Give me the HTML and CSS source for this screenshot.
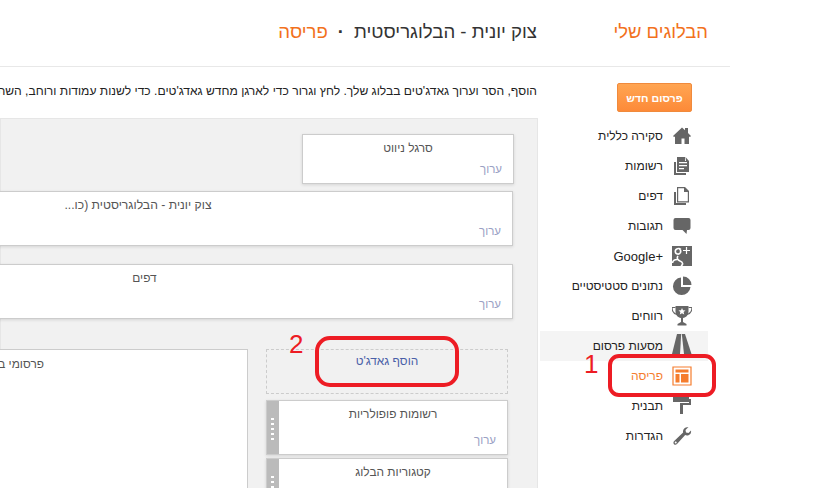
FILE: index.html
```html
<!DOCTYPE html>
<html lang="he" dir="rtl">
<head>
<meta charset="utf-8">
<title>פריסה</title>
<link rel="stylesheet" href="styles.css">
</head>
<body>
<div class="page">
  <header class="topbar">
    <div class="brand">הבלוגים שלי</div>
    <div class="crumb"><span>צוק יונית - הבלוגריסטית</span><span class="dot">·</span><span class="here">פריסה</span></div>
  </header>
  <div class="columns">
    <aside class="side">
      <button class="new-post">פרסום חדש</button>
      <nav class="nav">
        <a class="row"><svg viewBox="0 0 20 20"><path d="M1 10 10 1.500l3 2.800V2h3v5l3 3-1 1-1-.5V18h-4.500v-5.500h-3V18H3v-7.500L2 11z"/></svg><span>סקירה כללית</span></a>
        <a class="row"><svg viewBox="0 0 20 20"><path d="M2 6h2v11h10v2H2z"/><path d="M5 1h8v4h1l-.5-4L17 5v11H5zm2 5v1.300h8V6zm0 3v1.300h8V9zm0 3v1.300h5V12z" fill-rule="evenodd"/></svg><span>רשומות</span></a>
        <a class="row"><svg viewBox="0 0 20 20"><path d="M2 6h2v11h10v2H2z"/><path d="M5 1h8l4 4v11.500H5zm1.200 1.200v13.100h9.600V6H12V2.200z" fill-rule="evenodd"/></svg><span>דפים</span></a>
        <a class="row"><svg viewBox="0 0 20 20"><path d="M3.500 2h13A2 2 0 0 1 18.500 4v8a2 2 0 0 1-2 2H15l-.5 4-4-4h-7a2 2 0 0 1-2-2V4a2 2 0 0 1 2-2z"/></svg><span>תגובות</span></a>
        <a class="row"><svg viewBox="0 0 20 20"><path d="M0 0h20v20H0z"/><g fill="none" stroke="#fff"><path stroke-width="1.600" d="M9 3.500C7 1.800 3.200 2.500 3.300 5.500c.1 3 4.200 3.400 5.200 1 .8-2-.6-3.500-1.500-4.200"/><path stroke-width="1.600" d="M6 10c-1.500 2-.5 4 2 5 3 1 3.500 3.500 1 5M5 13.500C2.500 13.500.8 15 .5 17"/><path stroke-width="1.200" d="M11 4.500h7M14.500 1v7"/></g></svg><span class="latin" dir="ltr">Google+</span></a>
        <a class="row"><svg viewBox="0 0 20 20"><path d="M9 1.500A8.800 8.800 0 1 0 18.500 11H9z"/><path d="M11 0.500a8.500 8.500 0 0 1 8.500 8.500H11z"/></svg><span>נתונים סטטיסטיים</span></a>
        <a class="row"><svg viewBox="0 0 20 20"><path d="M3.500 0h13v5.500C16.500 9 14 11.500 11 12v4l3.500 2v1.500h-9V18L9 16v-4C6 11.500 3.500 9 3.500 5.500z"/><path d="M3.500 1.500H0C0 5 1.500 7.500 5 8.500M16.500 1.500H20c0 3.500-1.500 6-5 7" fill="none" stroke="#666" stroke-width="1.200"/><path fill="#fff" d="m10 2 1 2.300 2.500.2-1.900 1.600.6 2.400L10 7.200 7.800 8.500l.6-2.400-1.900-1.600L9 4.300z"/></svg><span>רווחים</span></a>
        <a class="row active"><svg class="tall" viewBox="0 0 20 20"><path d="M5 -2H9.200L8 18H0z"/><path d="M9.800 -2H13L19.500 18H12z"/></svg><span>מסעות פרסום</span></a>
        <a class="row current"><svg viewBox="0 0 20 20"><path d="M1 1h18v18H1z" fill="none" stroke="#f57d2e" stroke-width="1.200"/><path fill="#f57d2e" d="M3.500 3.500h13v3h-13zM3.500 8h4v8.500h-4zM9 8h7.500v8.500H9z"/></svg><span>פריסה</span></a>
        <a class="row"><svg viewBox="0 0 20 20"><path d="M1 1h16v5H1z"/><path d="M17 3h2v6H11v9H8V7h9z"/></svg><span>תבנית</span></a>
        <a class="row"><svg viewBox="0 0 20 20"><path d="M19 4.500c.5 2.500-1 5-4 5-.8 0-1.300-.2-1.800-.4L5 18c-1 1-2.200 1-3 .2S1.200 16 2.200 15l8.900-8.400c-.4-2.800 1.200-5.600 5.400-5.600l-3 3 .5 2.500 2.500.5z"/><circle cx="3.700" cy="16.500" r="1" fill="#fff"/></svg><span>הגדרות</span></a>
      </nav>
    </aside>
    <main class="main">
      <p class="intro">הוסף, הסר וערוך גאדג'טים בבלוג שלך. לחץ וגרור כדי לארגן מחדש גאדג'טים. כדי לשנות עמודות ורוחב, השתמש במעצב התבניות.</p>
      <section class="panel">
        <div class="card nav-card"><div class="card-title">סרגל ניווט</div><a class="edit">ערוך</a></div>
        <div class="card wide head-card"><div class="card-title title-head">צוק יונית - הבלוגריסטית (כו...</div><a class="edit">ערוך</a></div>
        <div class="card wide pages-card"><div class="card-title title-pages">דפים</div><a class="edit">ערוך</a></div>
        <div class="lower">
          <div class="gadgets">
            <div class="add-gadget">הוסף גאדג'ט</div>
            <div class="card gadget"><div class="grip"></div><div class="gadget-body"><div class="card-title">רשומות פופולריות</div><a class="edit">ערוך</a></div></div>
            <div class="card gadget second"><div class="grip"></div><div class="gadget-body"><div class="card-title">קטגוריות הבלוג</div><a class="edit">ערוך</a></div></div>
          </div>
          <div class="posts-card">פרסומי בלוג</div>
        </div>
      </section>
    </main>
  </div>
</div>
<div class="ring ring-one"></div>
<div class="ring ring-two"></div>
<div class="mark mark-one">1</div>
<div class="mark mark-two">2</div>
</body>
</html>
```
FILE: styles.css
```css
* { box-sizing: border-box; }
html, body { margin: 0; padding: 0; height: 488px; overflow: hidden; background: #fff; }
body { position: relative; width: 819px; direction: ltr; font-family: "Liberation Sans", Arial, sans-serif; font-size: 12px; color: #222; }
.page { direction: rtl; width: 730px; overflow: hidden; height: 488px; }
.topbar { display: flex; height: 67px; border-bottom: 1px solid #e8e8e8; font-size: 18.6px; line-height: 63px; }
.brand { color: #f2711c; width: 193px; padding-right: 22px; flex: none; font-size: 18.4px; }
.crumb { color: #333; white-space: nowrap; }
.dot { margin: 0 10px; font-weight: bold; }
.here { color: #f2711c; }
.columns { display: flex; }
.side { width: 192px; flex: none; padding-top: 16px; }
.new-post { display: block; width: 75px; height: 29px; margin: 0 38px 9px 0; padding: 0; border: 1px solid #f08a3c; border-radius: 2px; background: linear-gradient(#ffa552, #fd8a38); color: #fff; font: bold 10.7px "Liberation Sans", Arial, sans-serif; }
.nav { width: 168px; margin-right: 22px; }
.row { display: flex; align-items: center; height: 30px; gap: 9px; padding-right: 16px; color: #222; }
.row svg { width: 20px; height: 20px; flex: none; fill: #666; }
.row svg.tall { overflow: visible; }
.latin { font-size: 13px; }
.active { background: #f4f4f4; }
.current { color: #f57d2e; }
.main { width: 538px; flex: none; }
.intro { margin: 0; height: 51px; padding: 17px 1px 0 0; line-height: 15px; font-size: 12.1px; white-space: nowrap; }
.panel { height: 400px; background: #f1f1f1; border: 1px solid #e6e6e6; padding: 15px 23px 0 0; }
.card { background: #fff; border: 1px solid #ccc; box-shadow: 0 1px 3px rgba(0, 0, 0, .12); color: #555; position: relative; }
.card-title { text-align: center; font-size: 11.9px; line-height: 15px; padding-top: 6px; }
.title-head { font-size: 12.2px; }
.edit { position: absolute; right: 11px; bottom: 7px; color: #9aa0c4; font-size: 11.5px; line-height: 14px; }
.nav-card { width: 212px; height: 50px; margin-bottom: 7px; }
.wide { width: 750px; height: 55px; margin-right: 1px; }
.head-card { margin-bottom: 18px; }
.title-pages { padding-left: 13px; }
.lower { display: flex; margin: 30px 6px 0 0; gap: 18px; align-items: flex-start; }
.gadgets { width: 242px; flex: none; }
.add-gadget { height: 45px; border: 1px dashed #ccc; color: #4a5fa8; text-align: center; font-size: 11.9px; line-height: 15px; padding-top: 4px; margin-bottom: 6px; }
.gadget { height: 55px; display: flex; margin-bottom: 3px; direction: ltr; }
.second { height: 60px; }
.grip { width: 12px; flex: none; background-color: #bbb; background-image: repeating-linear-gradient(#fff 0 2px, transparent 2px 5px); background-repeat: no-repeat; background-size: 3px 22px; background-position: 4px 17px; }
.gadget-body { flex: 1; direction: rtl; position: relative; }
.posts-card { width: 468px; height: 200px; flex: none; background: #fff; border: 1px solid #ccc; padding: 7px 0; text-align: center; font-size: 11.9px; line-height: 15px; color: #555; }
.ring { position: absolute; border: 4px solid #ed1c24; }
.ring-one { left: 608px; top: 354px; width: 108px; height: 43px; border-radius: 11px; }
.ring-two { left: 315px; top: 336px; width: 144px; height: 51px; border-radius: 15px; }
.mark { position: absolute; color: #ed1c24; font-size: 26px; line-height: 30px; }
.mark-one { left: 584px; top: 349px; }
.mark-two { left: 289px; top: 329px; }
```
